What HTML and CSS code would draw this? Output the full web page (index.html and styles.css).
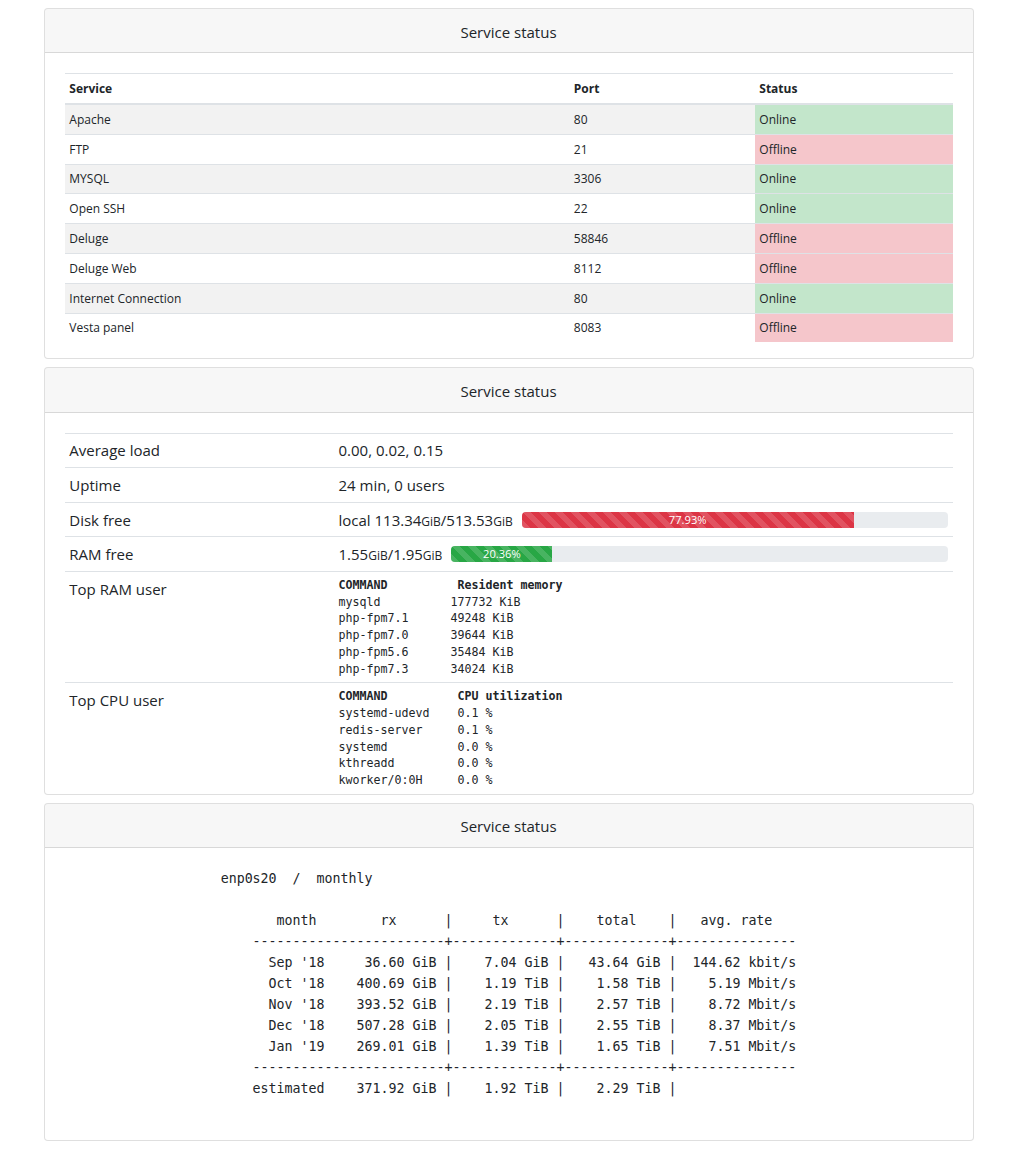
FILE: index.html
```html
<!DOCTYPE html>
<html lang="en">
<head>
<meta charset="utf-8">
<title>Service status</title>
<link rel="stylesheet" href="styles.css">
</head>
<body>
<div class="container">
  <section class="card">
    <div class="card-header">Service status</div>
    <div class="card-body card-body--services">
      <table class="tbl tbl-services">
        <colgroup><col class="c-service"><col class="c-port"><col class="c-status"></colgroup>
        <thead><tr><th>Service</th><th>Port</th><th>Status</th></tr></thead>
        <tbody>
          <tr><td>Apache</td><td>80</td><td class="st-on">Online</td></tr>
          <tr><td>FTP</td><td>21</td><td class="st-off">Offline</td></tr>
          <tr><td>MYSQL</td><td>3306</td><td class="st-on">Online</td></tr>
          <tr><td>Open SSH</td><td>22</td><td class="st-on">Online</td></tr>
          <tr><td>Deluge</td><td>58846</td><td class="st-off">Offline</td></tr>
          <tr><td>Deluge Web</td><td>8112</td><td class="st-off">Offline</td></tr>
          <tr><td>Internet Connection</td><td>80</td><td class="st-on">Online</td></tr>
          <tr><td>Vesta panel</td><td>8083</td><td class="st-off">Offline</td></tr>
        </tbody>
      </table>
    </div>
  </section>

  <section class="card">
    <div class="card-header">Service status</div>
    <div class="card-body card-body--stats">
      <table class="tbl tbl-stats">
        <colgroup><col class="c-label"><col></colgroup>
        <tbody>
          <tr><td>Average load</td><td>0.00, 0.02, 0.15</td></tr>
          <tr><td>Uptime</td><td>24 min, 0 users</td></tr>
          <tr><td>Disk free</td><td><div class="usage"><span class="usage-text">local 113.34<small>GiB</small>/513.53<small>GiB</small></span><div class="progress"><div class="bar bar-danger" style="width:77.93%">77.93%</div></div></div></td></tr>
          <tr><td>RAM free</td><td><div class="usage"><span class="usage-text">1.55<small>GiB</small>/1.95<small>GiB</small></span><div class="progress"><div class="bar bar-success" style="width:20.36%">20.36%</div></div></div></td></tr>
          <tr><td>Top RAM user</td><td><pre class="ps"><b>COMMAND          Resident memory</b>
mysqld          177732 KiB
php-fpm7.1      49248 KiB
php-fpm7.0      39644 KiB
php-fpm5.6      35484 KiB
php-fpm7.3      34024 KiB</pre></td></tr>
          <tr><td>Top CPU user</td><td><pre class="ps"><b>COMMAND          CPU utilization</b>
systemd-udevd    0.1 %
redis-server     0.1 %
systemd          0.0 %
kthreadd         0.0 %
kworker/0:0H     0.0 %</pre></td></tr>
        </tbody>
      </table>
    </div>
  </section>

  <section class="card">
    <div class="card-header">Service status</div>
    <div class="card-body card-body--vnstat">
<pre class="vnstat">enp0s20  /  monthly

       month        rx      |     tx      |    total    |   avg. rate
    ------------------------+-------------+-------------+---------------
      Sep '18     36.60 GiB |    7.04 GiB |   43.64 GiB |  144.62 kbit/s
      Oct '18    400.69 GiB |    1.19 TiB |    1.58 TiB |    5.19 Mbit/s
      Nov '18    393.52 GiB |    2.19 TiB |    2.57 TiB |    8.72 Mbit/s
      Dec '18    507.28 GiB |    2.05 TiB |    2.55 TiB |    8.37 Mbit/s
      Jan '19    269.01 GiB |    1.39 TiB |    1.65 TiB |    7.51 Mbit/s
    ------------------------+-------------+-------------+---------------
    estimated    371.92 GiB |    1.92 TiB |    2.29 TiB |</pre>
    </div>
  </section>
</div>
</body>
</html>
```

FILE: styles.css
```css
* { box-sizing: border-box; }

body {
  margin: 8px;
  font-family: "Open Sans", "Noto Sans", sans-serif;
  font-size: 15px;
  line-height: 24px;
  color: #212529;
  background: #fff;
}

.container {
  width: 960px;
  margin: 0 auto;
  padding: 0 15px;
}

.card {
  border: 1px solid rgba(0, 0, 0, .125);
  border-radius: 4px;
  margin-bottom: 8px;
  background: #fff;
}

.card-header {
  background: rgba(0, 0, 0, .03);
  border-bottom: 1px solid rgba(0, 0, 0, .125);
  border-radius: 3px 3px 0 0;
  padding: 13.5px 20px 10.5px;
  line-height: 19.2px;
  text-align: center;
}

.card-body { padding: 20px; }
.card-body--services { padding-bottom: 16px; }
.card-body--stats { padding-bottom: 0; }
.card-body--vnstat { padding-bottom: 41px; text-align: center; }

.tbl {
  width: 100%;
  border-collapse: collapse;
  table-layout: fixed;
}

.tbl th,
.tbl td {
  padding: 4.8px;
  border-top: 1px solid #dee2e6;
  text-align: left;
  vertical-align: top;
}

.tbl-services {
  font-size: 12px;
  line-height: 19.2px;
}

.tbl-services th {
  font-weight: 700;
  vertical-align: bottom;
  border-bottom: 2px solid #dee2e6;
}

.tbl-services tbody tr:nth-child(odd) { background: rgba(0, 0, 0, .05); }

.c-service { width: 504.5px; }
.c-port { width: 185.5px; }

.st-on { background: #c3e6cb; }
.st-off { background: #f5c6cb; }

.c-label { width: 269.2px; }

.usage {
  display: flex;
  align-items: center;
  gap: 9px;
  height: 24px;
}

.usage-text {
  white-space: nowrap;
  line-height: 24px;
}

.usage-text small {
  font-size: 80%;
  line-height: 0;
}

.progress {
  flex: 1;
  display: flex;
  height: 16px;
  overflow: hidden;
  background: #e9ecef;
  border-radius: 4px;
  font-size: 11.2px;
  line-height: 16px;
}

.bar {
  color: #fff;
  text-align: center;
  white-space: nowrap;
  background-size: 16px 16px;
  background-image: linear-gradient(45deg, rgba(255, 255, 255, .15) 25%, transparent 25%, transparent 50%, rgba(255, 255, 255, .15) 50%, rgba(255, 255, 255, .15) 75%, transparent 75%, transparent);
}

.bar-danger { background-color: #dc3545; }
.bar-success { background-color: #28a745; }

.ps {
  margin: 0;
  font-family: "DejaVu Sans Mono", monospace;
  font-size: 11.63px;
  line-height: 16.8px;
  color: #212529;
}

.vnstat {
  display: inline-block;
  margin: 0;
  text-align: left;
  font-family: "DejaVu Sans Mono", monospace;
  font-size: 13.29px;
  line-height: 21px;
  color: #212529;
}
```
